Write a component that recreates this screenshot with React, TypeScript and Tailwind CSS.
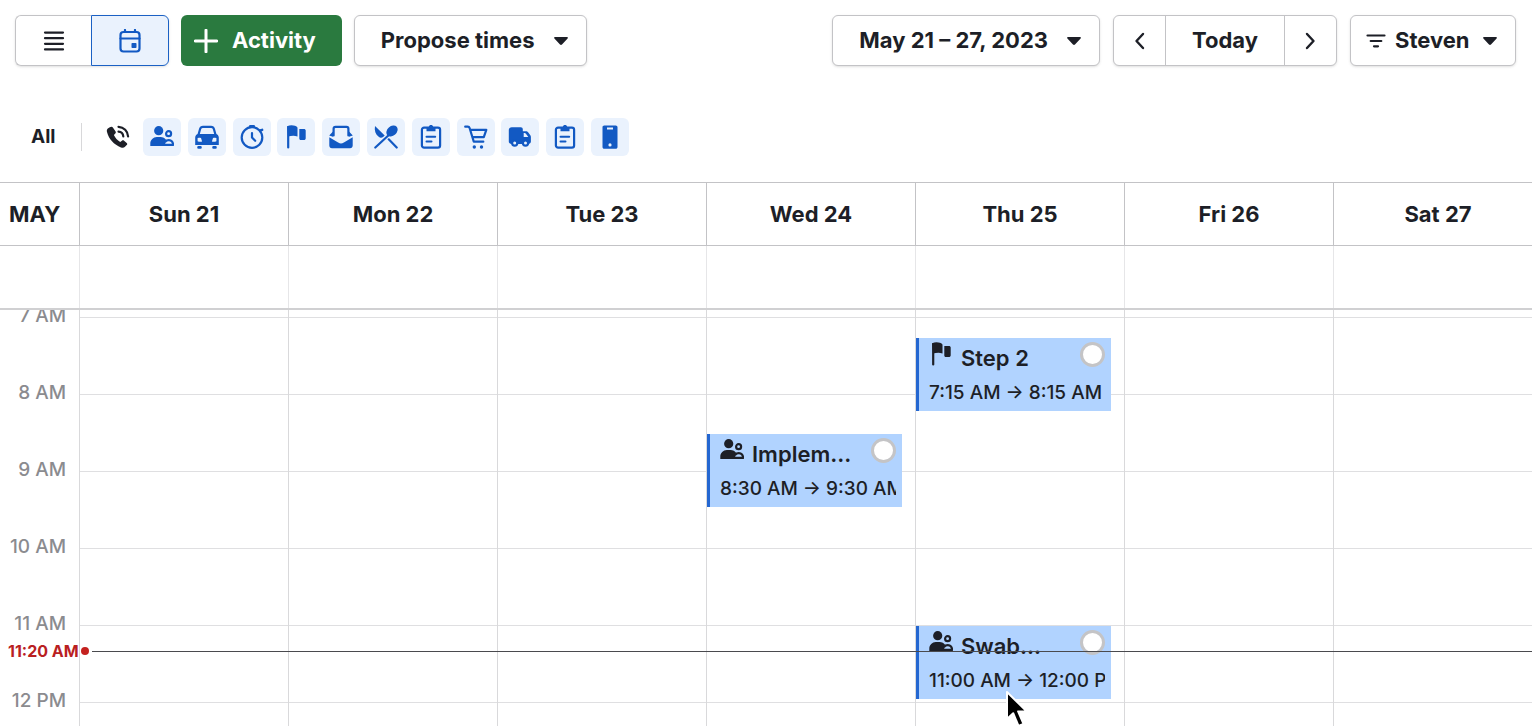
import { useState } from 'react';
import type { ReactNode } from 'react';
import clsx from 'clsx';

const HOUR_HEIGHT = 77;
const FIRST_HOUR = 7;
const GRID_OFFSET = 8;

const Icon = ({ children, className = 'h-6 w-6' }: { children: ReactNode; className?: string }) => (
  <svg viewBox="0 0 24 24" className={clsx('shrink-0', className)} fill="none" stroke="currentColor" strokeWidth="2.200" strokeLinecap="round" strokeLinejoin="round" aria-hidden="true">
    {children}
  </svg>
);

const Caret = () => (
  <svg viewBox="0 0 14 8" className="h-2 w-3.5 shrink-0" fill="currentColor" aria-hidden="true">
    <path d="M1 0h12c.9 0 1.200.8.600 1.400L8 7.500c-.6.600-1.400.600-2 0L.4 1.400C-.2.8.1 0 1 0z" />
  </svg>
);

const CallIcon = () => (
  <Icon>
    <path d="M3.800 2.200 1.800 3.600C.9 4.300.6 5.600 1 7c1.700 7 7 12.700 14 15.400 1.500.6 3 .4 4-.6l1.700-1.700c.7-.7.7-1.500 0-2.200l-2.600-2.200c-.7-.6-1.500-.6-2.200 0l-1.700 1.300c-2.900-1.700-5-4-6.300-7l1.400-1.500c.6-.7.7-1.300.3-2.100L7.200 3C6.500 1.600 5.200 1.300 3.800 2.200z" fill="currentColor" stroke="none" />
    <path d="M12.500 1.800c5.300.2 9.400 4.400 9.600 9.700M12.500 6.700c2.700.2 4.600 2.100 4.800 4.800" />
  </Icon>
);

const PeopleIcon = ({ className }: { className?: string }) => (
  <Icon className={className}>
    <circle cx="8.700" cy="5.700" r="4.600" fill="currentColor" stroke="none" />
    <path d="M.3 21v-2.500C.3 15 3.300 12 6.800 12h3.700c2.400 0 4.500 1.300 5.700 3.100-.9 1.100-1.200 2.500-.8 4.100l.5 1.800z" fill="currentColor" stroke="none" />
    <circle cx="18.600" cy="8.700" r="2.500" />
    <path d="M14 19.900h9c.2-2.900-1.500-4.800-4.200-4.800-1.600 0-2.700.5-3.400 1.600" />
  </Icon>
);

const CarIcon = () => (
  <Icon>
    <path d="M3 11.500 5.100 4C5.500 2.500 6.500 1.800 8 1.800h8c1.500 0 2.500.7 2.900 2.200l2.100 7.500" />
    <path fillRule="evenodd" d="M3.500 9h17c2 0 3.300 1.600 3.300 3.500V20H.2v-7.500C.2 10.600 1.500 9 3.500 9zM6 13c-1.400-.5-2.600-.4-3.400 0v3.300c1.500.6 2.900.6 4.500.3zM18 13c1.400-.5 2.600-.4 3.400 0v3.300c-1.500.6-2.900.6-4.500.3z" fill="currentColor" stroke="none" />
    <path d="M3.500 22.400h2M18.500 22.400h2" strokeWidth="2.600" />
  </Icon>
);

const ClockIcon = () => (
  <Icon>
    <circle cx="12" cy="12.500" r="10.300" />
    <path d="M10.300 1.500h3.400" strokeWidth="2.800" />
    <path d="m20.300 5.500 1.900-.7" strokeWidth="2.400" />
    <path d="M12 8v4.500l3.200 3.300" />
  </Icon>
);

const FlagIcon = ({ className }: { className?: string }) => (
  <Icon className={className}>
    <path d="M4.200 2v20.500" />
    <path d="M3.100 1.200C6 0 9 .3 11 .8c1.600.4 2.500 1.200 2.500 2.500v8.300c-3.500-1.300-6.500-.6-9.500 0z" fill="currentColor" stroke="none" />
    <path d="M15.300 4h4.500c1.200 0 1.900.6 1.900 1.700v7.500c0 1.100-.7 1.800-1.900 1.800h-2.900c-1.100 0-1.600-.6-1.600-1.800z" fill="currentColor" stroke="none" />
  </Icon>
);

const InboxIcon = () => (
  <Icon>
    <path d="M4.600 10.500V3.800c0-1.200.7-1.900 1.900-1.900h11c1.200 0 1.900.7 1.900 1.900v6.700" />
    <path d="M4 6.500.2 10.500 4 11.800zM20 6.500l3.800 4-3.800 1.300z" fill="currentColor" stroke="none" />
    <path d="m.3 12.300 8.800 5.300c2.200 1.200 3.600 1.200 5.800 0l8.800-5.300v8.200c0 1.600-1 2.700-2.700 2.700H3c-1.700 0-2.700-1.100-2.700-2.700z" fill="currentColor" stroke="none" />
  </Icon>
);

const MealIcon = () => (
  <Icon>
    <path d="M1.300 22.500 17 8M22.700 22.500l-8-8.200" />
    <path d="M1 1c-.8 4.500.5 8.300 3.700 10.800 1.500 1.200 3.200 1.100 4.700-.1l1.300-1.100z" fill="currentColor" stroke="none" />
    <ellipse cx="18" cy="6" rx="6.300" ry="4.700" transform="rotate(-42 18 6)" fill="currentColor" stroke="none" />
  </Icon>
);

const ClipboardIcon = () => (
  <Icon>
    <rect x="2.900" y="2.600" width="18.200" height="20" rx="2.200" />
    <path d="M7.500 2h2.300c.3-2.600 4.100-2.600 4.400 0h2.300v4.300h-9z" fill="currentColor" stroke="none" />
    <path d="M7.500 11.800h8.700M7.500 16.500h5" strokeWidth="2" />
  </Icon>
);

const CartIcon = () => (
  <Icon>
    <path d="M1.200 1.700h2.600c1 0 1.500.4 1.800 1.300l4.200 13.700h9.500M6.100 4.800h16.200l-2.500 7.400H8.500" />
    <circle cx="10.300" cy="22" r="1.700" fill="currentColor" stroke="none" />
    <circle cx="17.500" cy="22" r="1.700" fill="currentColor" stroke="none" />
  </Icon>
);

const TruckIcon = () => (
  <Icon>
    <path fillRule="evenodd" d="M3.800 2.300h9c1.200 0 2 .7 2 2v1.900h3c1.100 0 1.900.4 2.500 1.300l2.200 3.100c.3.400.4.900.4 1.400v4.500c0 1.500-1.200 2.500-2.700 2.500H3.500c-1.500 0-2.700-1-2.700-2.500V5.300c0-1.800 1.200-3 3-3zM15.700 8v4h4.600l-2.400-3.300c-.3-.5-.7-.7-1.200-.7z" fill="currentColor" stroke="none" />
    <circle cx="6.700" cy="18" r="2.600" className="fill-[#eaf2fd]" />
    <circle cx="17.500" cy="18" r="2.600" className="fill-[#eaf2fd]" />
  </Icon>
);

const PhoneIcon = () => (
  <Icon>
    <path fillRule="evenodd" d="M6.300.4h11.400c1.100 0 1.800.7 1.800 1.800v19.700c0 1.100-.7 1.800-1.800 1.800H6.300c-1.100 0-1.800-.7-1.800-1.800V2.200C4.500 1.100 5.200.4 6.300.4zM9 2.600v1.800h6V2.600zm3 15.700a1.600 1.600 0 1 0 0 3.200 1.600 1.600 0 0 0 0-3.200z" fill="currentColor" stroke="none" />
  </Icon>
);

const filters = [
  { name: 'Meeting', icon: PeopleIcon },
  { name: 'Visit', icon: CarIcon },
  { name: 'Task', icon: ClockIcon },
  { name: 'Deadline', icon: FlagIcon },
  { name: 'Email', icon: InboxIcon },
  { name: 'Lunch', icon: MealIcon },
  { name: 'Notes', icon: ClipboardIcon },
  { name: 'Order', icon: CartIcon },
  { name: 'Delivery', icon: TruckIcon },
  { name: 'Report', icon: ClipboardIcon },
  { name: 'Mobile', icon: PhoneIcon },
];

const days = ['Sun 21', 'Mon 22', 'Tue 23', 'Wed 24', 'Thu 25', 'Fri 26', 'Sat 27'];
const hours = ['7 AM', '8 AM', '9 AM', '10 AM', '11 AM', '12 PM'];

const events = [
  { day: 'Wed 24', start: 8.5, title: 'Implem...', time: '8:30 AM → 9:30 AM', icon: PeopleIcon },
  { day: 'Thu 25', start: 7.25, title: 'Step 2', time: '7:15 AM → 8:15 AM', icon: FlagIcon },
  { day: 'Thu 25', start: 11, title: 'Swab...', time: '11:00 AM → 12:00 PM', icon: PeopleIcon },
];

const hourToPx = (hour: number) => GRID_OFFSET + (hour - FIRST_HOUR) * HOUR_HEIGHT;

const outline = 'flex h-[51px] items-center rounded-md border border-[#c3c3c6] bg-white shadow-sm';

const Toolbar = () => {
  const [view, setView] = useState('calendar');

  return (
    <header className="flex items-center justify-between px-4 pt-[15px] pl-[15px] text-[22px] font-bold whitespace-nowrap">
      <div className="flex items-center gap-3">
        <div className="flex h-[51px] rounded-md shadow-sm">
          <button
            aria-label="List view"
            onClick={() => setView('list')}
            className={clsx(
              'flex w-[76px] items-center justify-center rounded-l-md border border-r-0',
              view === 'list' ? 'border-[#1b61c4] bg-[#eaf2fd] text-[#1259c3]' : 'border-[#c3c3c6]'
            )}
          >
            <Icon>
              <path d="M3 3.600h18M3 9.200h18M3 14.800h18M3 20.400h18" />
            </Icon>
          </button>
          <button
            aria-label="Calendar view"
            onClick={() => setView('calendar')}
            className={clsx(
              'flex w-[78px] items-center justify-center rounded-r-md border',
              view === 'calendar' ? 'border-[#1b61c4] bg-[#eaf2fd] text-[#1259c3]' : 'border-[#c3c3c6]'
            )}
          >
            <Icon>
              <rect x="2.500" y="3" width="19" height="19.500" rx="3" />
              <path d="M2.500 9.500h19M7 1v2M17 1v2" />
              <rect x="13.500" y="14" width="5" height="5" rx=".8" fill="currentColor" stroke="none" />
            </Icon>
          </button>
        </div>
        <button className="flex h-[51px] items-center gap-[14px] rounded-md bg-[#2a7a3f] pr-[26px] pl-[13px] text-white">
          <Icon>
            <path d="M12 1.200v21.600M1.200 12h21.600" strokeWidth="3" />
          </Icon>
          Activity
        </button>
        <button aria-haspopup="menu" className={clsx(outline, 'gap-[19px] pr-[18px] pl-[26px]')}>
          Propose times <Caret />
        </button>
      </div>

      <div className="flex items-center gap-[13px]">
        <button aria-haspopup="dialog" className={clsx(outline, 'gap-[19px] pr-[18px] pl-[26px]')}>
          May 21 – 27, 2023 <Caret />
        </button>
        <div className={clsx(outline, 'divide-x divide-[#c3c3c6]')}>
          <button aria-label="Previous week" className="flex h-full w-[52px] items-center justify-center">
            <Icon>
              <path d="m15 5-6.500 7L15 19" strokeWidth="2.400" />
            </Icon>
          </button>
          <button className="h-full w-[119px]">Today</button>
          <button aria-label="Next week" className="flex h-full w-[51px] items-center justify-center">
            <Icon>
              <path d="m8 5 6.500 7L8 19" strokeWidth="2.400" />
            </Icon>
          </button>
        </div>
        <div className={clsx(outline, 'relative')}>
          <Icon className="pointer-events-none absolute left-[13px] h-6 w-6">
            <path d="M3.500 6.500h17M6.700 12h10.600M10 17.300h4" />
          </Icon>
          <select aria-label="User" className="h-full appearance-none bg-transparent pr-[45px] pl-[44px]">
            <option>Steven</option>
          </select>
          <span className="pointer-events-none absolute right-[18px]">
            <Caret />
          </span>
        </div>
      </div>
    </header>
  );
};

const FilterBar = () => (
  <div className="mt-[52px] flex items-center pl-[31px]">
    <button className="w-[50px] text-left text-[19px] font-bold">All</button>
    <div className="h-7 w-px bg-[#d8d8da]" />
    <button aria-label="Call" className="mr-1.5 ml-[17px] flex h-[38px] w-[38px] items-center justify-center">
      <CallIcon />
    </button>
    <div className="flex w-[486px] justify-between">
      {filters.map(({ name, icon: FilterIcon }) => (
        <button key={name} aria-label={name} className="flex h-[38px] w-[38px] items-center justify-center rounded-md bg-[#eaf2fd] text-[#1259c3]">
          <FilterIcon />
        </button>
      ))}
    </div>
  </div>
);

type CalendarEvent = (typeof events)[number];

const EventCard = ({ event }: { event: CalendarEvent }) => {
  const EventIcon = event.icon;
  return (
    <article
      className="absolute right-[13px] left-0 h-[73px] border-l-3 border-[#2467d1] bg-[#b1d3ff] pr-1.5 pl-2.5"
      style={{ top: Math.ceil(hourToPx(event.start)) }}
    >
      <div className="flex h-[39px] items-start">
        <EventIcon className="mt-1 h-6 w-6" />
        <h3 className="ml-2 flex-1 truncate text-[22px] leading-[40px] font-semibold">{event.title}</h3>
        <input type="checkbox" aria-label={`Mark ${event.title} as done`} className="mt-1 h-[25px] w-[25px] shrink-0 appearance-none rounded-full border-3 border-[#c4c4c6] bg-white" />
      </div>
      <p className="overflow-hidden text-[19px] leading-8 font-medium whitespace-nowrap">{event.time}</p>
    </article>
  );
};

const Cursor = () => (
  <svg viewBox="0 0 24 38" className="pointer-events-none absolute top-[690px] left-[1004px] z-30 h-[38px] w-6" aria-hidden="true">
    <path d="M3 2v27l6.200-5.800L14.500 36l5-2.100-5.400-12.500h8.500z" fill="#000" stroke="#fff" strokeWidth="2" strokeLinejoin="round" />
  </svg>
);

const WeekCalendar = () => (
  <section className="mt-[26px] flex min-h-0 flex-1 flex-col overflow-hidden border-t border-[#c3c3c6]">
    <div className="-mr-2.5 grid h-[63px] shrink-0 grid-cols-[79px_repeat(7,1fr)] border-b border-[#c3c3c6] text-[22px] font-bold">
      <div className="flex items-center pl-[9px]">MAY</div>
      {days.map((day) => (
        <div key={day} className="flex items-center justify-center border-l border-[#c3c3c6]">
          {day}
        </div>
      ))}
    </div>

    {/* All day row */}
    <div className="-mr-2.5 grid h-16 shrink-0 grid-cols-[79px_repeat(7,1fr)] border-b-2 border-[#d0d0d2]">
      <div />
      {days.map((day) => (
        <div key={day} className="border-l border-[#e6e6e8]" />
      ))}
    </div>

    <div className="relative -mr-2.5 grid min-h-0 flex-1 grid-cols-[79px_repeat(7,1fr)] overflow-hidden">
      <div className="-mt-8 h-0 pr-[13px] text-right text-[19px] font-medium text-[#8b8b8f]">
        {hours.map((hour) => (
          <div key={hour} className="flex h-[77px] items-center justify-end">
            {hour}
          </div>
        ))}
      </div>
      {days.map((day) => (
        <div key={day} className="relative border-l border-[#d9d9db]">
          <div className="h-2 border-b border-[#dfdfe1]" />
          {hours.map((hour) => (
            <div key={hour} className="h-[77px] border-b border-[#dfdfe1] last:hidden" />
          ))}
          {events
            .filter((event) => event.day === day)
            .map((event) => (
              <EventCard key={event.title} event={event} />
            ))}
        </div>
      ))}

      {/* Current time */}
      <div
        className="absolute inset-x-0 z-20 flex h-0 items-center"
        style={{ top: Math.floor(hourToPx(FIRST_HOUR + 4 + 20 / 60)) }}
      >
        <span className="w-[81px] shrink-0 pl-2 text-[16px] font-bold whitespace-nowrap text-[#b9201f]">11:20 AM</span>
        <span className="mr-[3px] h-2 w-2 shrink-0 rounded-full bg-[#c4211f]" />
        <span className="h-px flex-1 bg-[#4a4a4e]" />
      </div>
    </div>
  </section>
);

const App = () => (
  <main className="relative flex h-screen min-w-[1200px] flex-col overflow-hidden bg-white font-['Inter',sans-serif] text-[#1d1f27]">
    <Toolbar />
    <FilterBar />
    <WeekCalendar />
    <Cursor />
  </main>
);

export default App;
